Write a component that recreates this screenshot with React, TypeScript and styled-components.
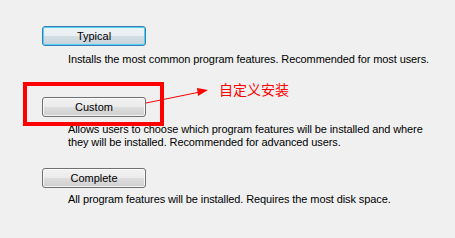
import React from "react";
import styled, { createGlobalStyle, css } from "styled-components";

const GlobalStyle = createGlobalStyle`
  html, body {
    margin: 0;
    padding: 0;
    background: #f0f0f0;
  }
  body {
    font-family: Tahoma, "Liberation Sans", Arial, sans-serif;
    font-size: 11px;
    color: #000;
  }
`;

const Page = styled.div`
  position: relative;
  width: 455px;
  height: 238px;
  overflow: hidden;
  background: #f0f0f0;
  box-sizing: border-box;
  padding: 26px 0 0 42px;
  display: flex;
  flex-direction: column;
`;

const Option = styled.div<{ $top: number; $gap: number }>`
  display: flex;
  flex-direction: column;
  align-items: flex-start;
  margin-top: ${(p) => p.$top}px;
  gap: ${(p) => p.$gap}px;
`;

const SetupButton = styled.button<{ $default?: boolean }>`
  box-sizing: border-box;
  width: 104px;
  height: 20px;
  padding: 0;
  margin: 0;
  font-family: Tahoma, "Liberation Sans", Arial, sans-serif;
  font-size: 11px;
  color: #000;
  border-radius: 3px;
  border: 1px solid #707070;
  background: linear-gradient(
    #f2f2f2 0%,
    #ebebeb 48%,
    #dddddd 52%,
    #cfcfcf 100%
  );
  box-shadow: inset 0 0 0 1px rgba(255, 255, 255, 0.75);
  line-height: 17px;
  ${(p) =>
    p.$default &&
    css`
      border-color: #3c7fb1;
      background: linear-gradient(
        #eff3f6 0%,
        #e8eef2 48%,
        #d3dde4 52%,
        #c7d3dc 100%
      );
      box-shadow: inset 0 0 0 1px #4fd0f8;
    `}
`;

const Description = styled.p<{ $indent: number }>`
  margin: 0 0 0 ${(p) => p.$indent}px;
  font-size: 11px;
  line-height: 13px;
  letter-spacing: -0.1px;
  color: #000;
  width: 370px;
`;

const Highlight = styled.div`
  position: absolute;
  left: 23px;
  top: 82px;
  width: 141px;
  height: 44px;
  box-sizing: border-box;
  border: 4px solid #ff0000;
  pointer-events: none;
`;

const ArrowSvg = styled.svg`
  position: absolute;
  left: 140px;
  top: 82px;
  width: 75px;
  height: 28px;
  overflow: visible;
  pointer-events: none;
`;

const Label = styled.span`
  position: absolute;
  left: 219px;
  top: 80px;
  font-family: "Noto Sans CJK SC", "Noto Sans CJK JP", sans-serif;
  font-size: 14px;
  line-height: 18px;
  color: #ff0000;
  white-space: nowrap;
`;

const options = [
  {
    label: "Typical",
    text: "Installs the most common program features. Recommended for most users.",
    top: 0,
    gap: 7,
    isDefault: true,
  },
  {
    label: "Custom",
    text: "Allows users to choose which program features will be installed and where they will be installed. Recommended for advanced users.",
    top: 31,
    gap: 6,
  },
  {
    label: "Complete",
    text: "All program features will be installed. Requires the most disk space.",
    top: 19,
    gap: 5,
  },
];

export default function App() {
  return (
    <>
      <GlobalStyle />
      <Page>
        {options.map((o) => (
          <Option key={o.label} $top={o.top} $gap={o.gap}>
            <SetupButton $default={o.isDefault}>{o.label}</SetupButton>
            <Description $indent={26}>{o.text}</Description>
          </Option>
        ))}
        <Highlight />
        <ArrowSvg viewBox="0 0 75 28">
          <line x1="6" y1="21" x2="60" y2="10" stroke="#ff0000" strokeWidth="1" />
          <polygon points="57,6 68,8 58,14" fill="#ff0000" />
        </ArrowSvg>
        <Label>自定义安装</Label>
      </Page>
    </>
  );
}
